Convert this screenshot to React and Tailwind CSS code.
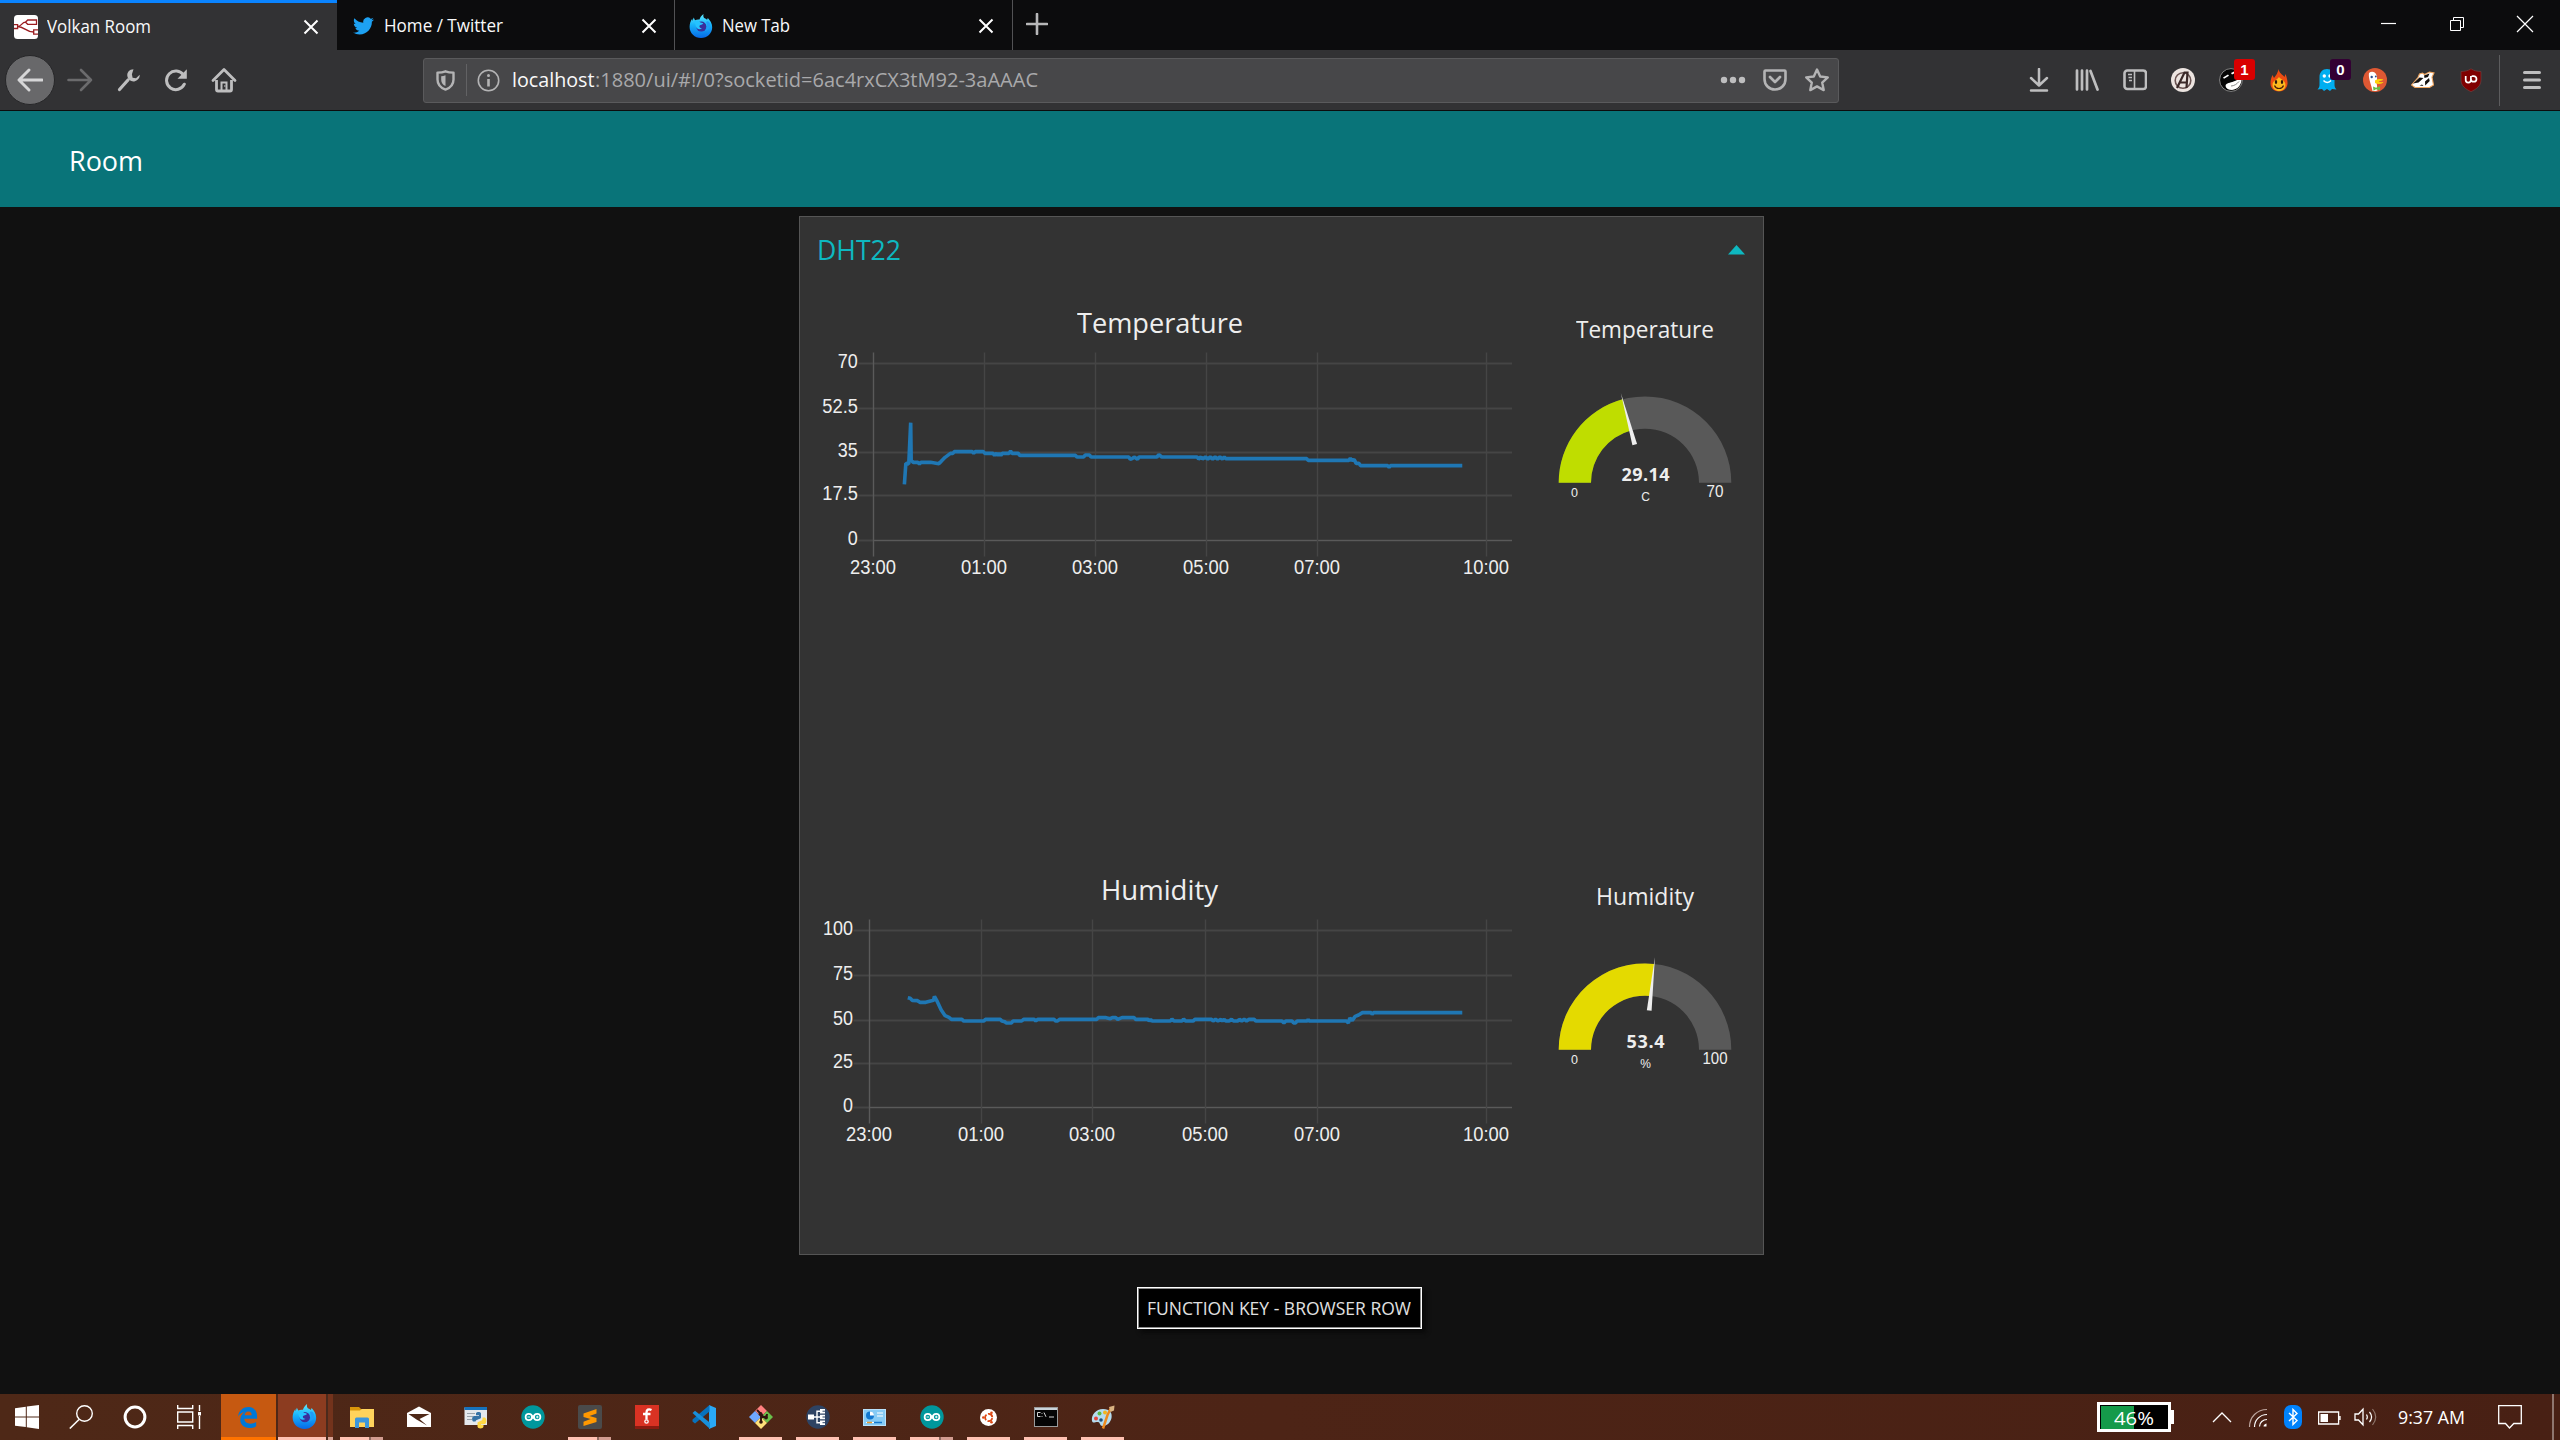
import { useLayoutEffect, useRef, useState } from "react";

/* Single-line text condensed or widened to an exact width. */
function Fit({ w, className = "", children }) {
  const ref = useRef(null);
  const [k, setK] = useState(1);
  useLayoutEffect(() => {
    const n = ref.current.getBoundingClientRect().width / k;
    if (n) setK(w / n);
  }, [w]);
  return (
    <span className={`block shrink-0 whitespace-nowrap ${className}`} style={{ width: w }}>
      <span ref={ref} className="inline-block origin-left" style={{ transform: `scaleX(${k})` }}>
        {children}
      </span>
    </span>
  );
}

function Svg({ s = 24, w, h, vb = "0 0 24 24", className = "", children }) {
  return (
    <svg width={w || s} height={h || s} viewBox={vb} fill="none" className={`shrink-0 ${className}`}>
      {children}
    </svg>
  );
}

/* ---------- logos ---------- */
function Firefox({ s = 24 }) {
  return (
    <Svg s={s}>
      <defs>
        <linearGradient id="fxb" x1="0" y1="0" x2="0" y2="1">
          <stop offset="0" stopColor="#5feaff" />
          <stop offset=".45" stopColor="#18b4fa" />
          <stop offset="1" stopColor="#0668e8" />
        </linearGradient>
      </defs>
      <path d="M14.5 0c-.4 2-.2 2.800.7 4 1.200.6 2 1 2.900 1.800l.7-1.900c2.300 2.300 4.400 5.500 4.400 9.300C23.200 19.300 18.300 24 12 24S.6 19.200.6 13c0-3.200.9-6 2.600-8.300L3.500 7l1.200-3.400L6 6.200c1.500-.8 3-.9 4.500-.7C11 3.500 12.500 1.500 14.500 0z" fill="url(#fxb)" />
      <circle cx="12.300" cy="12.600" r="5" fill="#3a2f9c" />
      <path d="M5 7.500c2.500-1.300 5-.6 6.500 1 1.500.2 2.500.6 2.800 1.300-1 1-2.800.8-3.600 1.700-.9 1 .2 2.800 2.300 2.700-2 1.700-5.200 1-6-1.500C6.300 11 6.500 9.500 5 7.500z" fill="#25c3ff" />
      <path d="M17 8c2 3 1.600 7-1.400 9 4-.6 6-4 5.200-7.500C20 7 18.300 6.800 17 8z" fill="#1f9cf8" />
    </Svg>
  );
}

function NodeRed() {
  return (
    <Svg s={24}>
      <rect width="24" height="24" rx="3.500" fill="#fff" />
      <g stroke="#9b1c20" strokeWidth="1.300">
        <path d="M0 9.700h3.600v3.800H0" />
        <path d="M22.500 5h-8.800L11.500 7.200 13.700 9.300h8.800z" />
        <path d="M24 14.800h-4.300v4.300H24" />
        <path d="M3.600 11.500c4 0 4-4.300 8-4.300M3.600 11.500c7 0 8 5.500 16 5.500" />
      </g>
    </Svg>
  );
}

function Twitter() {
  return (
    <Svg w={21} h={18} vb="0 2 24 20">
      <path fill="#1da1f2" d="M23.953 4.570a10 10 0 01-2.825.775 4.958 4.958 0 002.163-2.723c-.951.555-2.005.959-3.127 1.184a4.920 4.920 0 00-8.384 4.482C7.690 8.095 4.067 6.130 1.640 3.162a4.822 4.822 0 00-.666 2.475c0 1.710.870 3.213 2.188 4.096a4.904 4.904 0 01-2.228-.616v.060a4.923 4.923 0 003.946 4.827 4.996 4.996 0 01-2.212.085 4.936 4.936 0 004.604 3.417 9.867 9.867 0 01-6.102 2.105c-.390 0-.779-.023-1.170-.067a13.995 13.995 0 007.557 2.209c9.053 0 13.998-7.496 13.998-13.985 0-.210 0-.420-.015-.630A9.935 9.935 0 0024 4.590z" />
    </Svg>
  );
}

function Arduino() {
  return (
    <Svg s={24}>
      <circle cx="12" cy="12" r="11.700" fill="#00979c" />
      <circle cx="7.800" cy="12" r="3.200" stroke="#fff" strokeWidth="1.700" />
      <circle cx="16.200" cy="12" r="3.200" stroke="#fff" strokeWidth="1.700" />
      <path d="M10.500 10.200l3 3.600M13.500 10.200l-3 3.600" stroke="#fff" strokeWidth="1.500" />
      <path d="M6.500 12h2.600M15 12h2.600M16.300 10.700v2.600" stroke="#fff" strokeWidth=".9" />
    </Svg>
  );
}

/* ---------- browser chrome ---------- */
function CloseX() {
  return (
    <Svg s={16} vb="0 0 16 16">
      <path d="M1.500 1.500l13 13M14.500 1.500l-13 13" stroke="#fff" strokeWidth="2" />
    </Svg>
  );
}

function Tabs() {
  return (
    <div className="flex h-[50px] bg-[#0c0c0d] text-[18px] text-[#f9f9fa]">
      <div className="flex w-[337px] items-center border-t-[3px] border-[#0a84ff] bg-[#323234] pl-[14px]">
        <NodeRed />
        <Fit w={104} className="-mt-px ml-[9px]">Volkan Room</Fit>
        <div className="ml-auto mr-[18px] flex"><CloseX /></div>
      </div>
      <div className="flex w-[338px] items-center border-r border-[#525254] pl-[16px] pt-[2px]">
        <Twitter />
        <Fit w={119} className="-mt-px ml-[10px]">Home / Twitter</Fit>
        <div className="ml-auto mr-[17px] flex"><CloseX /></div>
      </div>
      <div className="flex w-[338px] items-center border-r border-[#525254] pl-[14px] pt-[2px]">
        <Firefox s={24} />
        <Fit w={68} className="-mt-px ml-[9px]">New Tab</Fit>
        <div className="ml-auto mr-[18px] flex"><CloseX /></div>
      </div>
      <Svg s={22} vb="0 0 22 22" className="ml-[13px] mt-[13px]">
        <path d="M11 1v20M1 11h20" stroke="#b7b7b8" strokeWidth="2.600" strokeLinecap="round" />
      </Svg>
      <div className="ml-auto flex pr-[2px] pt-[8px]">
        <div className="flex w-[68px] justify-center">
          <Svg s={32} vb="0 0 32 32"><path d="M9 15.500h15" stroke="#fff" strokeWidth="1.200" /></Svg>
        </div>
        <div className="flex w-[69px] justify-center">
          <Svg s={32} vb="0 0 32 32"><path d="M9.500 12.500h10v10h-10zM12.500 12.500v-3h10v10h-3" stroke="#fff" /></Svg>
        </div>
        <div className="flex w-[67px] justify-center">
          <Svg s={32} vb="0 0 32 32"><path d="M8 8l16 16M24 8L8 24" stroke="#fff" strokeWidth="1.200" /></Svg>
        </div>
      </div>
    </div>
  );
}

const G = "#bebebf";

function Toolbar() {
  return (
    <div className="flex h-[61px] items-center border-b border-[#0c0c0d] bg-[#323234]">
      <div className="ml-[5px] flex size-[50px] items-center justify-center rounded-full border border-[#262628] bg-[#68686a]">
        <Svg s={26} vb="0 0 26 26">
          <path d="M25 13H2.500M12 3L2 13l10 10" stroke="#d6d6d7" strokeWidth="2.900" strokeLinecap="round" strokeLinejoin="round" />
        </Svg>
      </div>
      <div className="flex w-[50px] justify-center">
        <Svg s={26} vb="0 0 26 26">
          <path d="M1.500 13H24M14 3l10 10-10 10" stroke="#6b6b6d" strokeWidth="2.600" strokeLinecap="round" strokeLinejoin="round" />
        </Svg>
      </div>
      <div className="flex w-[47px] justify-center">
        <Svg s={24}>
          <path d="M2.500 21.500L11 12" stroke={G} strokeWidth="3.200" strokeLinecap="round" />
          <path d="M16.500 1.200c-4 0-6.800 3.300-6.100 7 .5 3.500 4.200 6 7.500 5 3-.7 5-3.400 4.800-6.400l-3.700 3.500-3.400-.6-.7-3.400z" fill={G} />
        </Svg>
      </div>
      <div className="flex w-[48px] justify-center">
        <Svg s={24}>
          <path d="M20.300 16.200A9.300 9.300 0 1119.500 7" stroke={G} strokeWidth="3" strokeLinecap="round" />
          <path d="M22.800 1.200v9.600h-9.300z" fill={G} />
        </Svg>
      </div>
      <div className="flex w-[48px] justify-center">
        <Svg s={26} vb="0 0 26 26">
          <path d="M2 13.500L13 2.500l11 11" stroke={G} strokeWidth="2.800" strokeLinecap="round" strokeLinejoin="round" />
          <path d="M5.500 13v9.500a1.500 1.500 0 001.500 1.500h12a1.500 1.500 0 001.500-1.500V13" stroke={G} strokeWidth="2.800" />
          <path d="M10.500 24v-8.500h5V24" stroke={G} strokeWidth="2" />
          <circle cx="13.800" cy="19" r=".8" fill={G} />
        </Svg>
      </div>

      <div className="ml-[175px] flex h-[45px] w-[1416px] items-center rounded-[3px] border border-[#5a5a5c] bg-[#474749] text-[20px] text-[#a9a9ab]">
        <Svg w={19} h={21} vb="0 0 19 21" className="ml-[12px]">
          <path d="M9.500 1.300C12 2.300 14.500 2.600 17.500 2.600v7c0 5-3 8.300-8 10-5-1.700-8-5-8-10v-7c3 0 5.500-.3 8-1.300z" stroke="#b4b4b5" strokeWidth="2.400" strokeLinejoin="round" />
          <path d="M9.500 5.300c-1.500.6-2.800.8-4.300.9v3.600c0 3 1.500 5 4.300 6.200z" fill="#b4b4b5" />
        </Svg>
        <div className="ml-[11px] h-[32px] w-px bg-[#626264]" />
        <Svg s={23} vb="0 0 23 23" className="ml-[10px]">
          <circle cx="11.500" cy="11.500" r="10.200" stroke="#b4b4b5" strokeWidth="1.600" />
          <path d="M11.500 10v7.500" stroke="#b4b4b5" strokeWidth="2.600" />
          <circle cx="11.500" cy="6.600" r="1.500" fill="#b4b4b5" />
        </Svg>
        <Fit w={82.500} className="ml-[12px] text-[#f9f9fa]">localhost</Fit>
        <Fit w={443}>:1880/ui/#!/0?socketid=6ac4rxCX3tM92-3aAAAC</Fit>
        <div className="ml-auto mr-[8px] flex items-center">
          <Svg w={26} h={8} vb="0 0 26 8">
            <g fill={G}><circle cx="4" cy="4" r="3.200" /><circle cx="13" cy="4" r="3.200" /><circle cx="22" cy="4" r="3.200" /></g>
          </Svg>
          <Svg w={26} h={24} vb="0 0 26 24" className="ml-[16px]">
            <path d="M3.500 2.500h19a1 1 0 011 1V11c0 6-4.500 10.500-10.500 10.500S2.500 17 2.500 11V3.500a1 1 0 011-1z" stroke="#b4b4b5" strokeWidth="2.600" />
            <path d="M8 9l5 5 5-5" stroke="#b4b4b5" strokeWidth="2.700" strokeLinecap="round" strokeLinejoin="round" />
          </Svg>
          <Svg s={26} vb="0 0 26 26" className="ml-[16px]">
            <path d="M13 2.500l3.200 7 7.600.9-5.600 5.200 1.500 7.500L13 19.400l-6.700 3.700 1.500-7.500-5.600-5.200 7.600-.9z" stroke="#b4b4b5" strokeWidth="2.400" strokeLinejoin="round" />
          </Svg>
        </div>
      </div>

      <div className="ml-[176px] flex items-center">
        <Ext>
          <path d="M12 1v16M4 10l8 7.500L20 10M4 22.500h16" stroke={G} strokeWidth="2.500" strokeLinecap="round" strokeLinejoin="round" />
        </Ext>
        <Ext>
          <path d="M2 2.500v19M7 2.500v19M12 2.500v19M15.500 3l7 18.500" stroke={G} strokeWidth="2.700" strokeLinecap="round" />
        </Ext>
        <Ext>
          <rect x="1.500" y="2.500" width="21.500" height="18.500" rx="2.800" stroke={G} strokeWidth="2.600" />
          <path d="M11.500 3v18" stroke={G} strokeWidth="1.600" />
          <path d="M5 6.500h4M5.500 9.500H9M6 12.500h3" stroke={G} strokeWidth="1.500" />
        </Ext>
        <Ext>
          <circle cx="12" cy="12" r="12" fill="#ece4e0" />
          <circle cx="12" cy="12.500" r="7.800" stroke="#6b5553" strokeWidth="1.600" />
          <path d="M6 20L13.500 4.500h3L15.500 20M8 14.500h8.500" stroke="#3a2827" strokeWidth="2.200" />
        </Ext>
        <Ext badge="1" badgeClass="bg-[#d90000]">
          <circle cx="12" cy="12" r="11.400" fill="#050505" stroke="#a0a0a0" strokeWidth=".8" />
          <path d="M4 9.500l5-3 1 1.200-5 3zM12 5l4-2 1 1.500-4 2zM6.500 18c.5-3.500 5-3 8-4.500 3-1 5-2.500 8-3.500.5 6.500-3.500 11.500-9.500 12-3.500 0-6-1.500-6.500-4z" fill="#fff" />
          <path d="M12 18c3 0 6-2 8-4.500" stroke="#8a8a8a" />
        </Ext>
        <Ext>
          <path d="M11.500 1c.5 4 4 5.500 6 8l1-3c1.500 4 2.200 7 2 10-.5 4.500-4 7.500-8.500 7.500S3.700 20.500 3.500 16c-.1-3 .5-6 2-9l1.500 3c2-2.500 4-5.500 4.500-9z" fill="#ed4c12" />
          <path d="M12 9c2 2.500 6.500 3.500 6.500 8 0 3.800-3 6-6.500 6s-6.500-2.200-6.500-6C5.500 12.500 10 12 12 9z" fill="#fbb81d" />
          <path d="M7.500 17.500c1.500 4 7.500 4 9 0" stroke="#4b1b08" strokeWidth="1.200" />
          <ellipse cx="9" cy="14" rx="1.200" ry="2" fill="#30170c" /><ellipse cx="15" cy="14" rx="1.200" ry="2" fill="#30170c" />
        </Ext>
        <Ext badge="0" badgeClass="bg-[#330033]">
          <path d="M4.500 9C4.500 4.500 7.500 1 12 1s7.500 3.500 7.500 8v8c0 2 .8 3 2 4.500l-4.500-.5-2 2-3-2-3 2-2-2-4.500.5c1.200-1.500 2-2.500 2-4.500z" fill="#00aef0" />
          <circle cx="9.300" cy="8" r="1.700" fill="#fff" /><circle cx="15" cy="8" r="1.700" fill="#fff" />
          <path d="M8.500 12.500c2 2.500 5.500 2.500 7.500 0" stroke="#fff" strokeWidth="1.500" />
        </Ext>
        <Ext>
          <circle cx="12" cy="12" r="12" fill="#de5833" />
          <path d="M6 5c2.500-2 6-1.500 7.500 2 1 3 .5 5.500.2 8l.8 7.500A11 11 0 019.500 23C8.500 17 5 10 6 5z" fill="#fff" />
          <path d="M12 12.500c2.500-1.500 6.500-1.800 8.500-.9-1 1.300-3.500 1.400-5 1.900 1.500 1 3.500.6 5 .6-1.300 2.200-6 2.500-8.500.9z" fill="#fdd20a" />
          <path d="M10 18.500l3 1.300 4-1.500v4l-4-1-2.500 1.500z" fill="#65bc46" />
          <circle cx="8.700" cy="9" r="1.200" fill="#2d4f8e" /><circle cx="12.800" cy="8.500" r=".9" fill="#2d4f8e" />
        </Ext>
        <Ext>
          <path d="M.5 17L7 9.500 8.500 6l3-1 2 1.500 5-2.500 4.500 1-2 4 1.500 8-4 2.500H4z" fill="#fff" stroke="#f0a45d" strokeWidth="1.100" />
          <path d="M2 15.500L8.500 9.500l4 .5-5 4.500zM13 7.500l5.500-2-1.500 3.500-3.500 1zM14 13.500l4-3.500.7 3-4.500 4.500zM8.500 17.500l2.500-1 1.500 1.500z" fill="#15110f" />
        </Ext>
        <Ext>
          <path d="M12 .8c3 2 6.500 2.700 10 2.700v8.500c0 6-4.500 9-10 11.700C6.500 21 2 18 2 12V3.500c3.500 0 7-.7 10-2.700z" fill="#800000" stroke="#6d4040" strokeWidth=".7" />
          <path d="M6.700 8v4a2.600 2.600 0 005.200 0V8M11.900 10.900a2.800 2.800 0 102.800-2.800h-2" stroke="#fff" strokeWidth="1.700" />
        </Ext>
      </div>
      <div className="ml-[4px] h-[51px] w-px bg-[#5c5c5e]" />
      <Svg w={20} h={20} vb="0 0 20 20" className="ml-[22px]">
        <path d="M2.500 2.500h15M2.500 10h15M2.500 17.500h15" stroke={G} strokeWidth="3" strokeLinecap="round" />
      </Svg>
    </div>
  );
}

function Ext({ badge, badgeClass = "", children }) {
  return (
    <div className="relative flex w-[48px] justify-center">
      <Svg s={24}>{children}</Svg>
      {badge && (
        <span className={`absolute -top-[9px] left-[27px] flex h-[21px] w-[21px] items-center justify-center rounded-[3px] font-['Liberation_Sans'] text-[15px] font-bold leading-none text-white ${badgeClass}`}>
          {badge}
        </span>
      )}
    </div>
  );
}

/* ---------- dashboard ---------- */
const temperature = {
  title: "Temperature", titleW: 166,
  yTicks: [["70", 490, 139], ["52.5", 624, 139], ["35", 758, 139], ["17.5", 887, 139], ["0", 1021, 139]],
  xTicks: [["23:00", 172], ["01:00", 402], ["03:00", 630], ["05:00", 859], ["07:00", 1089], ["10:00", 1436]],
  top: 457,
  bottom: 1068,
  line: "236,853 239,790 245,792 249,668 250,780 254,787 264,787 267,792 270,787 290,787 307,791 312,784 320,772 331,760 336,760 339,755 376,755 379,760 382,755 399,755 402,760 419,760 422,766 426,760 429,766 432,760 435,766 438,760 452,760 455,753 458,760 471,760 474,766 589,766 592,771 606,771 609,765 618,765 621,771 699,771 702,778 706,776 710,771 717,778 720,771 757,771 761,764 767,771 840,771 843,777 848,771 851,777 857,771 862,777 867,771 872,777 877,771 882,777 887,771 892,777 896,771 899,776 1066,776 1069,781 1153,781 1156,775 1159,781 1164,779 1168,790 1174,790 1177,797 1233,797 1236,802 1239,797 1387,797",
};

const humidity = {
  title: "Humidity", titleW: 117,
  yTicks: [["100", 491, 129], ["75", 625, 129], ["50", 759, 129], ["25", 888, 129], ["0", 1022, 129]],
  xTicks: [["23:00", 164], ["01:00", 396], ["03:00", 624], ["05:00", 857], ["07:00", 1089], ["10:00", 1436]],
  top: 458,
  bottom: 1070,
  line: "243,692 248,694 252,700 263,701 268,706 280,706 296,700 298,688 304,704 312,729 320,746 328,751 333,757 355,757 358,762 400,762 403,757 434,757 437,762 443,764 446,768 457,768 460,762 478,762 482,757 504,757 507,762 511,757 545,757 548,762 552,762 556,757 633,757 636,752 652,752 661,755 665,752 672,752 676,757 685,752 710,752 713,757 739,757 741,762 744,757 747,762 785,762 788,756 792,762 809,762 812,756 816,762 832,762 835,757 870,757 873,762 878,757 883,762 889,757 892,762 896,757 899,762 906,762 911,757 915,762 924,762 927,757 932,762 937,757 942,762 947,757 958,757 961,762 1015,762 1019,768 1023,762 1036,762 1039,768 1043,768 1046,762 1067,762 1069,757 1071,762 1148,762 1152,768 1155,753 1160,760 1166,748 1173,744 1181,737 1199,737 1201,742 1204,737 1387,737",
};

const SX = 0.4847;
const px = (x) => Math.floor(x * SX - 10) + 0.5;
const py = (y) => Math.floor(y / 3 - 140) + 0.5;
const tickW = { 1: 10, 2: 20, 3: 30, 4: 35.500, 5: 46 };

function Chart({ data }) {
  const axisX = data.xTicks[0][1];
  return (
    <div className="w-[720px] pt-[23px]">
      <div className="flex h-[36px] items-center justify-center pr-px text-[28px] font-medium text-[#eeeeee]">
        <Fit w={data.titleW}>{data.title}</Fit>
      </div>
      <svg width="720" height="240" viewBox="0 0 720 240" fill="none" className="block">
        {data.yTicks.map(([label, y, right], i) => (
          <g key={label}>
            <path d={`M${right * SX - 9} ${py(y)}H712`} stroke="#454545" strokeWidth="2" />
            {i === 4 && <path d={`M${px(axisX)} ${py(y)}H712`} stroke="#5a5a5a" />}
            <text x={right * SX - 9.500} y={py(y) + 4.500} textAnchor="end" textLength={tickW[label.length]} lengthAdjust="spacingAndGlyphs" fontSize="20" fill="#eeeeee" fontFamily="Liberation Sans, sans-serif">
              {label}
            </text>
          </g>
        ))}
        {data.xTicks.map(([label, x], i) => (
          <g key={label}>
            <path d={`M${px(x)} ${py(data.top)}V${py(data.bottom)}`} stroke={i ? "#454545" : "#5a5a5a"} strokeWidth="1.400" />
            <text x={px(x) - 0.500} y="233.500" textAnchor="middle" textLength={tickW[5]} lengthAdjust="spacingAndGlyphs" fontSize="20" fill="#eeeeee" fontFamily="Liberation Sans, sans-serif">
              {label}
            </text>
          </g>
        ))}
        <polyline
          points={data.line}
          transform="translate(-10 -140) scale(.4847 .33333)"
          vectorEffect="non-scaling-stroke"
          stroke="#1f77b4"
          strokeWidth="3.600"
          strokeLinejoin="bevel"
        />
      </svg>
    </div>
  );
}

function Gauge({ title, titleW, value, valueW, unit, max, maxW, frac, color }) {
  const cx = 118;
  const cy = 135.700;
  const a = Math.PI * (1 - frac);
  const at = (r) => `${cx + r * Math.cos(a)} ${cy - r * Math.sin(a)}`;
  const nx = Math.sin(a) * 2.400;
  const ny = Math.cos(a) * 2.400;
  const bx = cx + 39.500 * Math.cos(a);
  const by = cy - 39.500 * Math.sin(a);
  return (
    <div className="ml-[7px] w-[236px] pt-[30px]">
      <div className="flex h-[36px] items-center justify-center text-[23px] font-medium text-[#eeeeee]">
        <Fit w={titleW}>{title}</Fit>
      </div>
      <svg width="236" height="190" viewBox="0 0 236 190" className="block" fill="#eeeeee">
        <path d={`M${cx - 86.300} ${cy}a86.300 86.300 0 01172.600 0h-32.300a54 54 0 00-108 0z`} fill="#595959" />
        <path d={`M${cx - 86.300} ${cy}A86.300 86.300 0 01${at(86.300)}L${at(54)}A54 54 0 00${cx - 54} ${cy}z`} fill={color} />
        <path d={`M${bx - nx} ${by - ny}L${bx + nx} ${by + ny}L${at(93)}z`} />
        <text x={cx + 0.500} y="134" textAnchor="middle" fontSize="18" fontWeight="700" textLength={valueW} fontFamily="Open Sans, sans-serif">{value}</text>
        <g fontFamily="Liberation Sans, sans-serif" textAnchor="middle">
          <text x="47.500" y="149.500" fontSize="12.500">0</text>
          <text x="118.500" y="153.500" fontSize="12">{unit}</text>
          <text x="188" y="149.800" fontSize="16" textLength={maxW} lengthAdjust="spacingAndGlyphs">{max}</text>
        </g>
      </svg>
    </div>
  );
}

function Dashboard() {
  return (
    <main className="flex h-[1283px] flex-col items-start">
      <header className="flex h-[96px] w-full items-center bg-[#097479] pl-[69px] pt-px text-[28px] font-medium text-white">
        <Fit w={74}>Room</Fit>
      </header>
      <section className="ml-[799px] mt-[9px] h-[1039px] w-[965px] border border-[#555555] bg-[#333333]">
        <div className="flex h-[64px] items-center justify-between pl-[17px] pr-[18px]">
          <Fit w={84} className="text-[28px] font-medium text-[#0eb8c0]">DHT22</Fit>
          <Svg w={17} h={10} vb="0 0 17 10" className="mt-px"><path d="M8.500 0L17 9.500H0z" fill="#0eb8c0" /></Svg>
        </div>
        <div className="flex h-[567px]">
          <Chart data={temperature} />
          <Gauge title="Temperature" titleW={138} value="29.14" valueW={48} unit="C" max="70" maxW={17} frac={0.4163} color="#bfdd00" />
        </div>
        <div className="flex">
          <Chart data={humidity} />
          <Gauge title="Humidity" titleW={98} value="53.4" valueW={38} unit="%" max="100" maxW={25} frac={0.534} color="#e4da00" />
        </div>
      </section>
      <div className="ml-[1137px] mt-[32px] flex h-[42px] w-[285px] items-center border border-white bg-black pb-px pl-[9px] text-[18.500px] text-[#e0e0e0] shadow-[inset_0_0_0_1px_#8a8a8a,4px_4px_4px_#0a0a0a]">
        <Fit w={264}>FUNCTION KEY - BROWSER ROW</Fit>
      </div>
    </main>
  );
}

/* ---------- taskbar ---------- */
function Slot({ bar, half, children }) {
  return (
    <div className="flex w-[57px] flex-col items-center">
      <div className="flex h-[43px] items-center pt-[3px]">{children}</div>
      {bar && !half && <div className="h-[3px] w-[43px] bg-[#ffc2b3]" />}
      {half && (
        <div className="flex h-[3px] w-[43px]">
          <div className="w-[29px] bg-[#ffc2b3]" />
          <div className="w-[2px] bg-[#8d6a60]" />
          <div className="w-[12px] bg-[#d29c90]" />
        </div>
      )}
    </div>
  );
}

function Taskbar() {
  return (
    <footer className="flex h-[46px] bg-[linear-gradient(90deg,#4e2817,#4d2416_50%,#482014)] text-white">
      <div className="flex w-[54px] items-center justify-center">
        <Svg s={24}><path d="M0 3.200l10.800-1.500v9.700H0zM11.800 1.500L24 0v11.400H11.800zM0 12.400h10.800v9.700L0 20.700zM11.800 12.400H24V24l-12.200-1.700z" fill="#fff" /></Svg>
      </div>
      <div className="flex w-[54px] items-center justify-center">
        <Svg s={24}><circle cx="15.500" cy="8.500" r="7.800" stroke="#fff" strokeWidth="1.400" /><path d="M10 14.500L.8 23.500" stroke="#fff" strokeWidth="1.600" /></Svg>
      </div>
      <div className="flex w-[54px] items-center justify-center">
        <Svg s={24}><circle cx="12" cy="12" r="9.900" stroke="#fff" strokeWidth="3" /></Svg>
      </div>
      <div className="flex w-[59px] items-center justify-center pr-[5px]">
        <Svg s={24}>
          <path d="M.7 0v3.500h15V0M.7 7h15v10h-15zM.7 24v-3.500h15V24M22.500 0v6M22.500 11v13" stroke="#fff" strokeWidth="1.400" />
          <path d="M21 7h3v3.500h-3z" fill="#fff" />
        </Svg>
      </div>
      <div className="flex w-[55px] flex-col bg-[#c65911]">
        <div className="flex h-[43px] items-center justify-center pr-[2px] pt-[3px]">
          <Svg w={20} h={22} vb="0 0 22 24">
            <path d="M0 11.500C1 4.500 6 1 11.500 1 18 1 21 6 21 11v3H7c.2 4 3.500 5.300 6.500 5.300 2.500 0 4.600-.6 6.500-1.800v4.700C18 23.400 15.300 24 12.500 24 6 24 2.500 20 2.500 15c0-4 2.200-7 5.200-8.500C4.500 7 1.700 8.800 0 11.500zM7.300 10H15c0-2.500-1.200-4-3.700-4S7.600 8 7.300 10z" fill="#0078d7" />
          </Svg>
        </div>
        <div className="h-[3px] bg-[#ff7300]" />
      </div>
      <div className="ml-[2px] flex w-[48px] flex-col bg-[#8c3c20]">
        <div className="flex h-[43px] items-center justify-center pl-[5px] pt-[2px]"><Firefox s={25} /></div>
        <div className="h-[3px] bg-[#ffc2b3]" />
      </div>
      <div className="flex w-[2px] flex-col bg-[#4b2a1c]" />
      <div className="flex w-[5px] flex-col justify-end bg-[#73331c]"><div className="h-[3px] bg-[#d8a396]" /></div>

      <Slot bar half>
        <Svg w={24} h={22} vb="0 0 24 22">
          <path d="M0 1h9l2 2v4H0z" fill="#d9960a" /><path d="M0 4.500h10l1.500-1.500H24v18H0z" fill="#ffd35c" />
          <path d="M5 22V13a1.500 1.500 0 011.500-1.500h11A1.500 1.500 0 0119 13v9h-4v-5.500H9V22z" fill="#3c96dc" />
        </Svg>
      </Slot>
      <Slot>
        <Svg w={24} h={22} vb="0 0 24 22" className="-mt-px">
          <path d="M0 7L12 .5 24 7v14H0z" fill="#fff" />
          <path d="M1.500 8h21L12.500 13l7.500 6.500L9.500 13.500z" fill="#4e2817" />
        </Svg>
      </Slot>
      <Slot>
        <Svg s={24}>
          <path d="M.5 2.500H23V20H.5z" fill="#e4e8ec" /><path d="M.5 2H23v3H.5z" fill="#1673bd" />
          <path d="M3 8.500h8M3 11.500h6M3 14.500h5" stroke="#9aa3ab" />
          <path d="M12 8.500c0-2 5-2 5 0v4c0 2-5 1.500-5.500 4H9c-1.500-2-1-5 1-5.500h5v-.8h-3z" fill="#3572a5" />
          <path d="M18.500 12.500H21c2 1.500 1.800 5.500 0 6.500h-4v.8h2.500v1.700c0 2.500-6 2.500-6 0V18c0-2 5-1.500 5-4z" fill="#ffd845" />
        </Svg>
      </Slot>
      <Slot><Arduino /></Slot>
      <Slot bar half>
        <Svg s={24}>
          <rect width="24" height="24" rx="2" fill="#4a4a4a" />
          <path d="M5.500 8.500L18.500 4v4.500L11.500 11l7 2v4L5.500 21v-4.200l7-2.800-7-2z" fill="#ff9800" />
        </Svg>
      </Slot>
      <Slot>
        <Svg s={24}>
          <path d="M0 0h24v24H0z" fill="#d93223" /><path d="M0 21h24v3H0z" fill="#8a1b10" />
          <path d="M16.500 5c-3-1.500-5-.3-5 2.500v7M8 9h7.500" stroke="#fff" strokeWidth="2.300" /><circle cx="11.500" cy="16.500" r="1.700" stroke="#fff" strokeWidth="1.300" />
        </Svg>
      </Slot>
      <Slot>
        <Svg s={24}>
          <path d="M17 0l7 3v18l-7 3z" fill="#2aa8f5" /><path d="M17.500 0v6.500L3 18.500.5 16.500v-2z" fill="#0872bd" /><path d="M.5 8L3 5.700l15 12V24z" fill="#188fda" />
        </Svg>
      </Slot>
      <Slot bar>
        <Svg s={24}>
          <path d="M12 0l6 6-6 6-6-6z" fill="#ff8080" /><path d="M6 6l6 6-6 6-6-6z" fill="#6fa8ff" /><path d="M18 6l6 6-6 6-6-6z" fill="#6abf4b" /><path d="M12 12l6 6-6 6-6-6z" fill="#ffe07a" />
          <path d="M8 5l6 6M12 8v10M12 12h4c1 0 2-1 2-3" stroke="#30140f" strokeWidth="1.900" />
          <circle cx="12" cy="17" r="1.800" fill="#30140f" /><circle cx="17" cy="12.500" r="1.900" fill="#30140f" /><circle cx="11.500" cy="9" r="2" fill="#30140f" />
        </Svg>
      </Slot>
      <Slot bar>
        <Svg s={24}>
          <circle cx="12" cy="12" r="11.700" fill="#2e4363" />
          <path d="M2 9.500h6v5H2zM14 4h5v4.500h-5zM14 9.800h5v4.500h-5zM14 15.500h5V20h-5z" fill="#fff" />
          <path d="M8 12h6M14 6.300h-3v11.400h3" stroke="#fff" strokeWidth="1.400" />
          <path d="M16.500 6.200H19M16.500 17.700H19M16.500 12H19" stroke="#2e4363" />
        </Svg>
      </Slot>
      <Slot bar>
        <Svg w={23} h={17} vb="0 0 23 17">
          <rect x=".5" y=".5" width="22" height="16" fill="#86cbf5" stroke="#b8e1fb" /><circle cx="7" cy="6.500" r="4" fill="#1277cf" /><path d="M7 6.500v-4a4 4 0 014 4z" fill="#fff" />
          <path d="M14 4h6M14 7h6M3 13.500h8" stroke="#fff" strokeWidth="1.200" /><path d="M11 13.500h8" stroke="#1277cf" strokeWidth="1.500" /><path d="M4 13.500h5" stroke="#e89a33" strokeWidth="1.500" />
        </Svg>
      </Slot>
      <Slot bar half><Arduino /></Slot>
      <Slot bar>
        <Svg s={17} vb="0 0 17 17">
          <circle cx="8.500" cy="8.500" r="8.500" fill="#fff" /><circle cx="8.700" cy="8.500" r="3.600" stroke="#dd4814" strokeWidth="1.800" strokeDasharray="6 1.540" strokeDashoffset="-.7" />
          <g fill="#dd4814"><circle cx="3.300" cy="8.500" r="1.300" /><circle cx="11.500" cy="3.800" r="1.300" /><circle cx="11.500" cy="13.200" r="1.300" /></g>
        </Svg>
      </Slot>
      <Slot bar>
        <Svg w={24} h={20} vb="0 0 24 20">
          <rect x=".5" y=".5" width="23" height="19" fill="#050505" stroke="#9a9a9a" /><path d="M1 1h22v2H1z" fill="#c9d3da" />
          <path d="M6.500 5.500H3.500v4h3M8 6v.8M8 9v.8M10 5.500l2 4.300M15 10h5" stroke="#d5d5d5" strokeWidth="1" />
        </Svg>
      </Slot>
      <Slot bar>
        <Svg s={24}>
          <path d="M1 16C0 10 5 4 12 4s9.500 4 8.500 9-5 8-9 8c-3 0-2-3.500-4.500-4S2 19 1 16z" fill="#b5dcef" />
          <circle cx="5" cy="13.500" r="2" fill="#e5473c" /><circle cx="8.500" cy="8.500" r="2" fill="#59b947" /><circle cx="14" cy="7.500" r="2" fill="#f3b41b" /><circle cx="10" cy="15" r="1.800" fill="#1d4f7b" />
          <path d="M12 23.500L16.500 10l3-6" stroke="#ee8a1e" strokeWidth="2.500" /><path d="M18 2l5.500-1.500-.5 5-3.500 1.500z" fill="#d9b382" />
        </Svg>
      </Slot>

      <div className="ml-auto flex items-center pr-px">
        <div className="flex h-[30px] w-[74px] items-center border-[3px] border-white bg-black p-px text-[19px] leading-none">
          <div className="flex h-[23px] w-[67px] items-center bg-[linear-gradient(90deg,#159a4a_50%,#000_50%)] pl-[13px] pt-[2px]">
            <Fit w={40}>46%</Fit>
          </div>
        </div>
        <div className="h-[14px] w-[3px] bg-white" />
        <Svg w={20} h={12} vb="0 0 20 12" className="ml-[38px]"><path d="M1 11l9-9 9 9" stroke="#fff" strokeWidth="1.300" /></Svg>
        <Svg w={20} h={20} vb="0 0 20 20" className="ml-[16px] mt-[2px]">
          <path d="M1.500 19C1.500 9 9 1.500 19 1.500" stroke="#bda69f" strokeWidth="1.200" />
          <path d="M6.500 19C6.500 12 12 6.500 19 6.500M11.500 18.500c0-4 3.500-7 7.500-7" stroke="#fff" strokeWidth="1.200" /><path d="M15.500 18.500c0-1.500 1-2.500 3-3v3z" fill="#fff" />
        </Svg>
        <div className="ml-[16px] flex h-[24px] w-[18px] items-center justify-center rounded-[7px] bg-[#0082fc]">
          <Svg w={10} h={18} vb="0 0 10 18"><path d="M1 5l8 7.500L5 16.500v-15l4 4L1 13" stroke="#fff" strokeWidth="1.400" /></Svg>
        </div>
        <Svg w={24} h={14} vb="0 0 24 14" className="ml-[16px] mt-[2px]"><path d="M.6 1h20v12H.6zM22 5v4" stroke="#fff" strokeWidth="1.300" /><path d="M2.500 3h7.500v8H2.500z" fill="#fff" /></Svg>
        <Svg w={24} h={20} vb="0 0 24 20" className="ml-[12px]">
          <path d="M1 7h3.500L9 2.200v15.600L4.500 13H1z" stroke="#fff" strokeWidth="1.300" /><path d="M12.500 7.500c1 1.500 1 3.500 0 5M15.500 5c2.500 3 2.500 7 0 10" stroke="#fff" strokeWidth="1.200" /><path d="M18.500 2c4 5 4 11 0 16" stroke="#8f766c" strokeWidth="1.200" />
        </Svg>
        <Fit w={67} className="ml-[20px] text-[18px]">9:37 AM</Fit>
        <Svg w={24} h={24} vb="0 0 24 24" className="ml-[33px]"><path d="M.7.700h22.600v17.800h-7.500L11.500 23l-4-4.500H.7z" stroke="#fff" strokeWidth="1.300" /></Svg>
        <div className="ml-[30px] mr-[5px] h-[46px] w-[2px] bg-[#8f766e]" />
      </div>
    </footer>
  );
}

export default function App() {
  return (
    <div className="flex h-[1440px] w-[2560px] flex-col overflow-hidden bg-[#111111] font-['Open_Sans',sans-serif]">
      <Tabs />
      <Toolbar />
      <Dashboard />
      <Taskbar />
    </div>
  );
}
